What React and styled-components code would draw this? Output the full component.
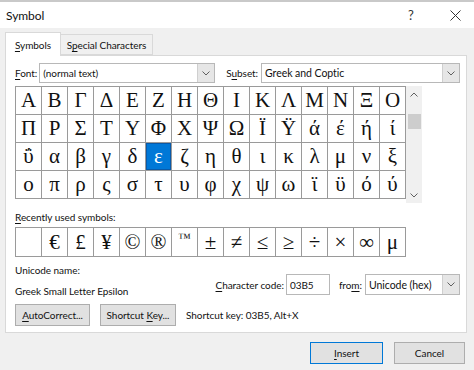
import React from 'react';
import styled, { createGlobalStyle } from 'styled-components';

const GlobalStyle = createGlobalStyle`
  html, body { margin: 0; padding: 0; }
  body {
    font-family: Lato, "Noto Sans", sans-serif;
    font-size: 10px;
    letter-spacing: -0.05px;
    color: #111;
    background: #f0f0f0;
  }
`;

const Window = styled.div`
  width: 474px;
  height: 370px;
  box-sizing: border-box;
  border-top: 2px solid #c9c9c9;
  display: flex;
  flex-direction: column;
  overflow: hidden;
  background: #f0f0f0;
`;

const TitleBar = styled.div`
  height: 26px;
  background: #fff;
  display: flex;
  align-items: center;
  padding-left: 6px;
  font-size: 12px;
`;

const Title = styled.div`
  flex: 1;
`;

const TitleButton = styled.div`
  width: ${p => p.w}px;
  margin-right: ${p => p.mr || 0}px;
  display: flex;
  justify-content: center;
  align-items: center;
  color: #333;
  font-size: 13px;
`;

const Body = styled.div`
  flex: 1;
  padding: 5px 7px 0 5px;
  display: flex;
  flex-direction: column;
`;

const Tabs = styled.div`
  display: flex;
  align-items: flex-end;
  height: 23px;
  position: relative;
  z-index: 1;
  margin-bottom: -1px;
`;

const Tab = styled.div`
  box-sizing: border-box;
  height: ${p => (p.active ? 24 : 21)}px;
  width: ${p => p.w}px;
  display: flex;
  align-items: center;
  justify-content: center;
  background: ${p => (p.active ? '#fff' : '#f0f0f0')};
  border: 1px solid #d9d9d9;
  border-bottom: ${p => (p.active ? 'none' : '1px solid #d9d9d9')};
  margin-left: ${p => (p.active ? 0 : -1)}px;
  margin-bottom: ${p => (p.active ? 0 : 1)}px;
`;

const Panel = styled.div`
  background: #fff;
  border: 1px solid #d9d9d9;
  height: 278px;
  box-sizing: border-box;
  padding: 7px 6px 0 9px;
  display: flex;
  flex-direction: column;
`;

const Row = styled.div`
  display: flex;
  align-items: center;
`;

const Label = styled.span`
  margin-right: ${p => p.mr || 0}px;
  margin-left: ${p => p.ml || 0}px;
  white-space: nowrap;
`;

const Key = styled.u`
  text-decoration: underline;
  text-underline-offset: 2px;
`;

const Combo = styled.div`
  box-sizing: border-box;
  width: ${p => (p.w ? p.w + 'px' : 'auto')};
  flex: ${p => (p.w ? 'none' : 1)};
  height: ${p => p.h || 20}px;
  border: 1px solid #b8b8b8;
  display: flex;
  align-items: stretch;
  background: #fff;
`;

const ComboText = styled.div`
  flex: 1;
  display: flex;
  align-items: center;
  padding-left: 3px;
  white-space: nowrap;
  font-size: ${p => (p.big ? 10.5 : 10)}px;
`;

const ComboButton = styled.div`
  width: 16px;
  border-left: 1px solid #cfcfcf;
  background: #e6e6e6;
  display: flex;
  align-items: center;
  justify-content: center;
`;

const Chevron = ({ up }) => (
  <svg width="8" height="5" viewBox="0 0 8 5">
    <polyline
      points={up ? '0.5,4.5 4,1 7.5,4.5' : '0.5,0.5 4,4 7.5,0.5'}
      fill="none"
      stroke="#606060"
      strokeWidth="1"
    />
  </svg>
);

const GridArea = styled.div`
  display: flex;
  margin-top: 3px;
`;

const CharGrid = styled.div`
  display: grid;
  grid-template-columns: repeat(15, 26px);
  grid-auto-rows: ${p => p.rowH}px;
  border-top: 1px solid #9a9a9a;
  border-left: 1px solid #9a9a9a;
  align-self: flex-start;
  margin-top: ${p => p.mt || 0}px;
`;

const Cell = styled.div`
  border-right: 1px solid #9a9a9a;
  border-bottom: 1px solid #9a9a9a;
  display: flex;
  align-items: center;
  justify-content: center;
  font-family: "Liberation Serif", "DejaVu Serif", serif;
  font-size: ${p => p.size || 21}px;
  letter-spacing: 0;
  line-height: 1;
  background: ${p => (p.selected ? '#0078d7' : '#fff')};
  color: ${p => (p.selected ? '#fff' : '#111')};
  box-shadow: ${p => (p.selected ? 'inset 0 0 0 1px #0a5aa8' : 'none')};
  padding-bottom: ${p => p.pb || 0}px;
  box-sizing: border-box;
`;

const ScrollBar = styled.div`
  width: 16px;
  height: 117px;
  background: #f0f0f0;
  display: flex;
  flex-direction: column;
  align-items: center;
`;

const ScrollArrow = styled.div`
  height: 16px;
  display: flex;
  align-items: center;
  justify-content: center;
`;

const ScrollSpace = styled.div`
  flex: 1;
`;

const Thumb = styled.div`
  width: 13px;
  height: 15px;
  margin-top: 12px;
  background: #cdcdcd;
`;

const Caption = styled.div`
  margin-top: ${p => p.mt || 0}px;
  height: 14px;
  display: flex;
  align-items: center;
`;

const InfoRow = styled.div`
  display: flex;
  justify-content: space-between;
  margin-top: 6px;
`;

const InfoLeft = styled.div`
  display: flex;
  flex-direction: column;
  gap: 7px;
`;

const InfoRight = styled.div`
  display: flex;
  align-items: center;
  margin-top: 8px;
`;

const CodeInput = styled.div`
  box-sizing: border-box;
  width: 44px;
  height: 21px;
  border: 1px solid #b8b8b8;
  padding: 0 3px;
  display: flex;
  align-items: center;
  margin: 0 9px 0 2px;
`;

const ButtonRow = styled.div`
  display: flex;
  align-items: center;
  gap: 10px;
  margin-top: 6px;
`;

const Button = styled.div`
  box-sizing: border-box;
  width: ${p => p.w}px;
  height: 22px;
  border: 1px solid ${p => (p.primary ? '#0078d7' : '#adadad')};
  background: #e1e1e1;
  display: flex;
  align-items: center;
  justify-content: center;
  white-space: nowrap;
`;

const Footer = styled.div`
  display: flex;
  justify-content: flex-end;
  gap: 11px;
  padding: 9px 2px 0 0;
`;

const rows = [
  'ΑΒΓΔΕΖΗΘΙΚΛΜΝΞΟ',
  'ΠΡΣΤΥΦΧΨΩΪΫάέήί',
  'ΰαβγδεζηθικλμνξ',
  'οπρςστυφχψωϊϋόύ',
];

const recent = ['', '€', '£', '¥', '©', '®', '™', '±', '≠', '≤', '≥', '÷', '×', '∞', 'μ'];

export default function App() {
  return (
    <>
      <GlobalStyle />
      <Window>
        <TitleBar>
          <Title>Symbol</Title>
          <TitleButton w={20} mr={15}>?</TitleButton>
          <TitleButton w={38}>
            <svg width="11" height="11" viewBox="0 0 11 11">
              <path d="M0.5 0.5 L10.5 10.5 M10.5 0.5 L0.5 10.5" stroke="#333" strokeWidth="1" />
            </svg>
          </TitleButton>
        </TitleBar>
        <Body>
          <Tabs>
            <Tab active w={56}><span><Key>S</Key>ymbols</span></Tab>
            <Tab w={93}><span>S<Key>p</Key>ecial Characters</span></Tab>
          </Tabs>
          <Panel>
            <Row>
              <Label mr={2}><Key>F</Key>ont:</Label>
              <Combo w={176}>
                <ComboText>(normal text)</ComboText>
                <ComboButton><Chevron /></ComboButton>
              </Combo>
              <Label ml={11} mr={3}>S<Key>u</Key>bset:</Label>
              <Combo>
                <ComboText big>Greek and Coptic</ComboText>
                <ComboButton><Chevron /></ComboButton>
              </Combo>
            </Row>
            <GridArea>
              <CharGrid rowH={28}>
                {rows.map((r, ri) =>
                  Array.from(r).map((ch, ci) => (
                    <Cell key={ri + '-' + ci} selected={ri === 2 && ci === 5}>
                      {ch}
                    </Cell>
                  ))
                )}
              </CharGrid>
              <ScrollBar>
                <ScrollArrow><Chevron up /></ScrollArrow>
                <Thumb />
                <ScrollSpace />
                <ScrollArrow><Chevron /></ScrollArrow>
              </ScrollBar>
            </GridArea>
            <Caption mt={7}><span><Key>R</Key>ecently used symbols:</span></Caption>
            <CharGrid rowH={29} mt={3}>
              {recent.map((ch, i) => (
                <Cell key={i} size={ch === '™' ? 13 : 21} pb={ch === '™' ? 9 : 0}>
                  {ch}
                </Cell>
              ))}
            </CharGrid>
            <InfoRow>
              <InfoLeft>
                <Caption>Unicode name:</Caption>
                <Caption>Greek Small Letter Epsilon</Caption>
              </InfoLeft>
              <InfoRight>
                <Label><Key>C</Key>haracter code:</Label>
                <CodeInput>03B5</CodeInput>
                <Label mr={3}>fro<Key>m</Key>:</Label>
                <Combo w={95} h={21}>
                  <ComboText big>Unicode (hex)</ComboText>
                  <ComboButton><Chevron /></ComboButton>
                </Combo>
              </InfoRight>
            </InfoRow>
            <ButtonRow>
              <Button w={75}><span><Key>A</Key>utoCorrect...</span></Button>
              <Button w={76}><span>Shortcut <Key>K</Key>ey...</span></Button>
              <Label>Shortcut key: 03B5, Alt+X</Label>
            </ButtonRow>
          </Panel>
          <Footer>
            <Button w={73} primary><span><Key>I</Key>nsert</span></Button>
            <Button w={71}>Cancel</Button>
          </Footer>
        </Body>
      </Window>
    </>
  );
}
